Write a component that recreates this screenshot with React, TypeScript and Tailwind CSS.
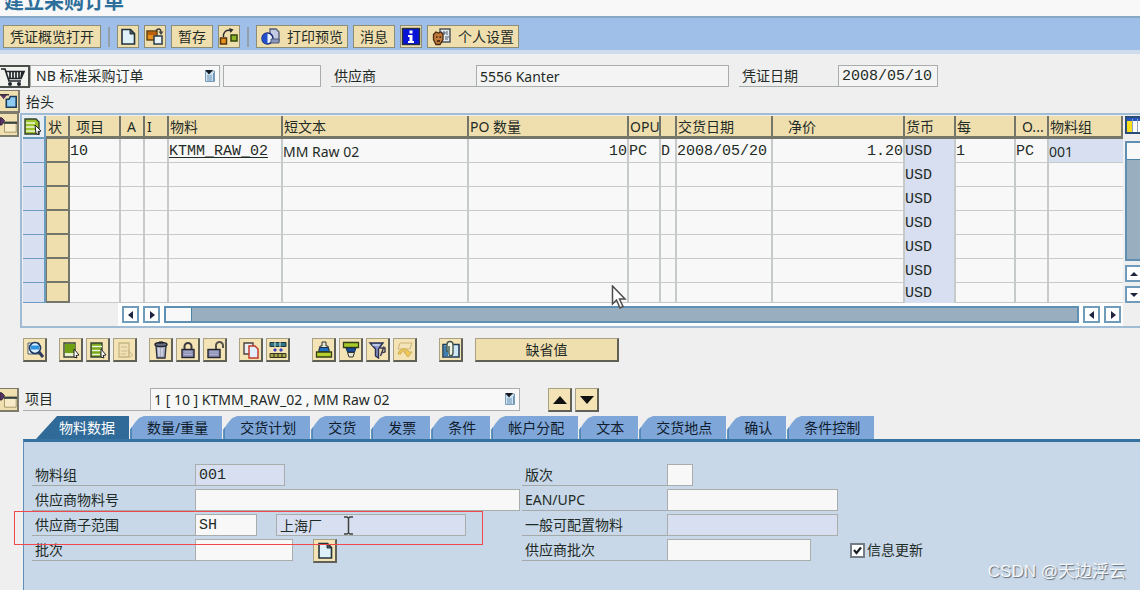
import type { ReactNode } from "react";

const sans = "font-['Noto_Sans','Noto_Sans_CJK_SC',sans-serif]";
const mono = "font-['Liberation_Mono','Noto_Sans_CJK_SC',monospace] text-[15px]";

function Svg({ children, size = 20 }: { children: ReactNode; size?: number }) {
  return (
    <svg width={size} height={size} viewBox="0 0 20 20" fill="none" aria-hidden="true" className="shrink-0">
      {children}
    </svg>
  );
}

const PageIcon = () => (
  <Svg>
    <path d="M4 2.5h8.5l4 4V17H4z" fill="#dff1f8" stroke="#23333a" strokeWidth="1.6" />
    <path d="M12 2.5v4.5h4.5z" fill="#4a5a60" stroke="#23333a" />
  </Svg>
);

const OtherDocIcon = () => (
  <Svg>
    <rect x="2" y="4" width="10" height="9" fill="#e8901c" stroke="#5a3a10" strokeWidth="1.4" />
    <path d="M3 5h8v3H3z" fill="#b8600c" />
    <rect x="9" y="9" width="8" height="8" fill="#e8f4fa" stroke="#2b3b48" strokeWidth="1.5" />
    <path d="M11 3.500c2-2.500 5-2 5 1.500" stroke="#333" strokeWidth="1.4" />
    <path d="M13.500 4.500h5L16 8z" fill="#444" />
  </Svg>
);

const FlowIcon = () => (
  <Svg>
    <rect x="1.5" y="11" width="6" height="6" fill="#e8901c" stroke="#53350f" strokeWidth="1.5" />
    <rect x="12" y="8" width="6" height="6" fill="#8db52a" stroke="#33450f" strokeWidth="1.5" />
    <path d="M4.500 10V7.500C5.500 4 8 2.500 11 3.500" stroke="#2b2b2b" strokeWidth="1.4" />
    <path d="m10 1 4.500 1.500L11.500 6z" fill="#2b2b2b" />
  </Svg>
);

const PreviewIcon = () => (
  <Svg>
    <path d="M9 2h6l3 3v9H9z" fill="#c3cbe2" stroke="#515a78" strokeWidth="1.3" />
    <circle cx="6.5" cy="11.5" r="5.5" fill="#e8f2ff" stroke="#1d2c78" strokeWidth="1.5" />
    <path d="M6.5 6a5.5 5.5 0 0 0 0 11z" fill="#234fc9" />
    <path d="M10 12h8v4h-8z" fill="#8b97bc" stroke="#515a78" />
  </Svg>
);

const InfoIcon = () => (
  <Svg>
    <rect x="1.5" y="1.5" width="17" height="16" fill="#0714d8" stroke="#26303c" strokeWidth="1.4" />
    <path d="M8.500 3.500h3v3h-3zM7 8h4.500v6H13v2H7v-2h1.500v-4H7z" fill="#fff" />
  </Svg>
);

const PersonalIcon = () => (
  <Svg>
    <rect x="8" y="2" width="10" height="13" fill="#e3eaf0" stroke="#454b52" strokeWidth="1.4" />
    <path d="M11 5h2v2h-2zM14 5h2M14 7h2M13 10h4M13 12h3" stroke="#4a5a6a" />
    <path d="M1.500 7.500 4 5l2.500 1L9 5l2 2.500v5L8 17.500H4l-2.500-5z" fill="#c07a3c" stroke="#4a2a12" strokeWidth="1.3" />
    <path d="M4 10h1.500M7.500 10H9M5 14h3" stroke="#3a1d0a" strokeWidth="1.3" />
  </Svg>
);

const CartIcon = () => (
  <svg width="28" height="20" viewBox="0 0 28 20" fill="none" aria-hidden="true">
    <path d="M1 2h4l4 12h12M6 4.500h18l-3 7H8.500M10 5v6M13 5v6M16 5v6M19 5v6M22 5l-1 6" stroke="#20262a" strokeWidth="1.7" />
    <circle cx="10" cy="17" r="2" fill="#20262a" />
    <circle cx="19" cy="17" r="2" fill="#20262a" />
  </svg>
);

const ListPickIcon = () => (
  <svg width="12" height="14" viewBox="0 0 12 14" fill="none" aria-hidden="true">
    <path d="M1.500 2h9v10.500h-9z" fill="#cfe3f1" stroke="#7c9db5" />
    <path d="M3 7h5M3 9h5M3 11h5M9.500 4v8" stroke="#6d97b8" />
    <path d="M1 1h8L5 5.500z" fill="#151b22" />
  </svg>
);

const HeaderExpandIcon = () => (
  <Svg size={18}>
    <path d="M7 8h3l1.500-3H18v12H7z" fill="#8ecbf2" stroke="#1e3c58" strokeWidth="1.8" />
    <path d="M0 3h8L4 8z" fill="#5c3468" />
    <path d="M0 3h10" stroke="#33303c" strokeWidth="1.6" />
  </Svg>
);

const FolderIcon = () => (
  <Svg size={18}>
    <path d="M5 7h13v11H5z" fill="#f8ecc8" stroke="#a29268" />
    <path d="M4 7.500h15" stroke="#33403c" strokeWidth="2.4" />
    <path d="M0 2h2l3 3-3 5H0z" fill="#5c3468" stroke="#2c2030" />
  </Svg>
);

const SelectAllIcon = () => (
  <Svg>
    <path d="M2 2h11l3 3v12H2z" fill="#9cc32b" stroke="#33402a" strokeWidth="1.4" />
    <path d="M3 6h9M3 10h10M3 14h9" stroke="#f2f8dc" strokeWidth="1.5" />
    <path d="m12 8 6 6-3 .5 1 3-3-1z" fill="#fff" stroke="#222" />
  </Svg>
);

const ColumnsIcon = () => (
  <svg width="24" height="19" viewBox="0 0 24 19" aria-hidden="true" className="shrink-0">
    <path d="M1 1h22v16H1z" fill="#fff" stroke="#2a4c78" strokeWidth="2" />
    <path d="M2 2h21v3H2z" fill="#2458bd" />
    <path d="M2 5h5v11H2z" fill="#f6de1a" />
    <path d="M7.500 3v13M12.500 3v13M17.500 3v13" stroke="#8ea6c4" />
  </svg>
);

const DetailIcon = () => (
  <Svg>
    <path d="M3 3h11v11H3z" fill="#f7f9fb" stroke="#555f66" />
    <circle cx="10" cy="8" r="5.500" fill="#d9efff" stroke="#1c3d63" strokeWidth="1.6" />
    <path d="M6 5.500h8v4H6z" fill="#2c93e0" />
    <path d="m14 12 4 5" stroke="#2b3a5e" strokeWidth="3" />
  </Svg>
);

const SelectBlockIcon = () => (
  <Svg>
    <path d="M3 3h11v14H3z" fill="#e6efd0" stroke="#394233" strokeWidth="1.4" />
    <path d="M4 4h10v9H4z" fill="#70a012" />
    <path d="m13 9 5 6-3 .5 1 2.500-3-1z" fill="#fff" stroke="#222" />
  </Svg>
);

const SelectRowsIcon = () => (
  <Svg>
    <path d="M3 3h11v14H3z" fill="#78a81c" stroke="#394233" strokeWidth="1.4" />
    <path d="M4 6.500h10M4 10.500h10M4 14.500h8" stroke="#eef4d6" strokeWidth="1.5" />
    <path d="m13 9 5 6-3 .5 1 2.500-3-1z" fill="#fff" stroke="#222" />
  </Svg>
);

const DeselectIcon = () => (
  <Svg>
    <path d="M4 3h10v14H4z" fill="#f0e0b4" stroke="#c8b684" strokeWidth="1.3" />
    <path d="M6 7h6M6 11h6M6 14h5M13 10l5 5-3 2z" stroke="#cdbb8a" />
  </Svg>
);

const TrashIcon = () => (
  <Svg>
    <path d="M5 6h10l-1 12H6z" fill="#a9adc4" stroke="#2b2e3c" strokeWidth="1.3" />
    <path d="M8 8v8M11 8v8" stroke="#eceef6" />
    <ellipse cx="10" cy="4.500" rx="6" ry="2" fill="#6c7084" stroke="#22252f" strokeWidth="1.4" />
    <path d="M8 2.500h4" stroke="#22252f" strokeWidth="2" />
  </Svg>
);

const LockIcon = () => (
  <Svg>
    <path d="M6.500 10V6.500a3.500 3.500 0 0 1 7 0V10" stroke="#3b3b3f" strokeWidth="2" />
    <rect x="4" y="9.500" width="12" height="8" fill="#8d8fb4" stroke="#24262f" strokeWidth="1.4" />
    <path d="M6 12h8M6 14.500h8" stroke="#b4b6d2" />
  </Svg>
);

const UnlockIcon = () => (
  <Svg>
    <path d="M11 9V5.500a3.500 3.500 0 0 1 7 0V8" stroke="#55534c" strokeWidth="2" />
    <rect x="3" y="9.500" width="12" height="8" fill="#8d8fb4" stroke="#24262f" strokeWidth="1.4" />
    <path d="M5 12h8M5 14.500h8" stroke="#b4b6d2" />
  </Svg>
);

const CopyIcon = () => (
  <Svg>
    <path d="M3 3h9v11H3z" fill="#eceef2" stroke="#4b4240" strokeWidth="1.4" />
    <path d="M8 6h6l3 3v9H8z" fill="#e2efff" stroke="#c33a2c" strokeWidth="1.5" />
  </Svg>
);

const CompareIcon = () => (
  <Svg>
    <path d="M2 2.500h16v4H2z" fill="#2f7688" stroke="#20343a" />
    <path d="M7 2v5M12 2v5" stroke="#d6e6d8" />
    <path d="m5 10 2-2 2 2-2 2zM11 10l2-2 2 2-2 2z" fill="#3f3fc4" />
    <path d="M2 13.500h16v4H2z" fill="#a8a24a" stroke="#34381f" />
    <path d="M6 13v5M10 13v5M14 13v5" stroke="#2b2f1c" />
  </Svg>
);

const SortUpIcon = () => (
  <Svg>
    <path d="M8 2h4v4h2l1 4H5l1-4h2z" fill="#e6e6d0" stroke="#333" />
    <path d="M6 7.500h8l1.500 4h-11z" fill="#1e6fc2" stroke="#183350" />
    <path d="M2.500 12h15v5h-15z" fill="#b5cf2e" stroke="#333f14" strokeWidth="1.300" />
  </Svg>
);

const SortDownIcon = () => (
  <Svg>
    <path d="M2.500 2.500h15v5h-15z" fill="#a9cb2a" stroke="#333f14" strokeWidth="1.300" />
    <path d="M5 8h10l-1.500 4h-7z" fill="#1a4c9c" stroke="#142b50" />
    <path d="M6.500 12.500h7L12 17H8z" fill="#e6e6d0" stroke="#333" />
  </Svg>
);

const FilterIcon = () => (
  <Svg>
    <path d="M2 3h13l-4.500 6v9l-3-2V9z" fill="#8795c9" stroke="#2a3052" strokeWidth="1.400" />
    <path d="M4.500 5h7" stroke="#d8dff6" strokeWidth="1.400" />
    <path d="M12.500 16 16 6.500M12 8h5v4l-4 1" stroke="#3e3e54" strokeWidth="1.500" />
  </Svg>
);

const SubtotalIcon = () => (
  <Svg>
    <path d="M5 3h12l-2 6H3z" fill="#f2e3b8" stroke="#cbb57c" />
    <path d="M3 14c1-6 9-7 11-2h3l-4 5-4-5h2c-2-2-5-1-5 2z" fill="#efc957" stroke="#cfae5a" />
  </Svg>
);

const AttachIcon = () => (
  <Svg>
    <path d="M2 4.500h16V17H2z" fill="#cfe8f8" stroke="#203d56" strokeWidth="1.600" />
    <path d="M3 5.500h4V16H3z" fill="#3f7fb0" />
    <path d="M6 12V4.500a3 3 0 0 1 6 0V12c0 5-4 5-4 1V6" fill="#f3f3e2" stroke="#42564a" strokeWidth="1.400" />
  </Svg>
);

function BarButton({ label, icon, children }: { label?: string; icon?: ReactNode; children?: ReactNode }) {
  const pad = !children ? "px-0" : icon ? "px-1" : "px-1.5";
  return (
    <button
      type="button"
      aria-label={label}
      className={`flex h-[23px] items-center whitespace-nowrap border border-[#8d8c74] bg-[#efdfaf] ${pad}`}
    >
      {icon}
      {children && <span className={icon ? "pl-1.5" : ""}>{children}</span>}
    </button>
  );
}

function IconButton({ label, children }: { label: string; children: ReactNode }) {
  return (
    <button
      type="button"
      aria-label={label}
      className="flex size-6 shrink-0 items-center justify-center border border-b-2 border-r-2 border-[#a9a184] border-b-[#5f6156] border-r-[#5f6156] bg-[#f3e3b5]"
    >
      {children}
    </button>
  );
}

function Field({ id, label, labelWidth, children }: { id: string; label: string; labelWidth: string; children: ReactNode }) {
  return (
    <div className="flex h-[22px]">
      <label htmlFor={id} className={`${labelWidth} shrink-0 border-b border-[#a3aaa9] pl-[3px] leading-[22px]`}>
        {label}
      </label>
      {children}
    </div>
  );
}

const box = "h-[22px] border border-[#a9aeac] px-[3px] outline-none";

function ArrowButton({ dir, label }: { dir: "left" | "right" | "up" | "down"; label: string }) {
  const paths = {
    left: "M7 1v8L2 5z",
    right: "M3 1v8l5-4z",
    up: "M1 7h8L5 3z",
    down: "M1 3h8L5 7z",
  };
  return (
    <button type="button" aria-label={label} className="flex size-[17px] shrink-0 items-center justify-center border-2 border-[#6f9cbb] bg-white">
      <svg width="10" height="10" viewBox="0 0 10 10" aria-hidden="true">
        <path d={paths[dir]} fill="#1c2440" />
      </svg>
    </button>
  );
}

const columns = [
  { label: "状", width: "w-6", pad: "pl-0.5" },
  { label: "项目", width: "w-[51px]", pad: "pl-1.5" },
  { label: "A", width: "w-6", pad: "pl-1.5" },
  { label: "I", width: "w-6", pad: "pl-0.5" },
  { label: "物料", width: "w-[114px]", pad: "pl-px" },
  { label: "短文本", width: "", pad: "pl-px" },
  { label: "PO 数量", width: "w-40", pad: "pl-px" },
  { label: "OPU", width: "w-8", pad: "pl-px" },
  { label: "", width: "w-4", pad: "" },
  { label: "交货日期", width: "w-24", pad: "pl-px" },
  { label: "净价", width: "w-[132px]", pad: "pl-[15px]" },
  { label: "货币", width: "w-[51px]", pad: "pl-px" },
  { label: "每", width: "w-[60px]", pad: "pl-px" },
  { label: "O...", width: "w-[33px]", pad: "pl-1.5" },
  { label: "物料组", width: "w-[74px]", pad: "pl-px" },
];

const emptyRow = { item: "", material: "", text: "", qty: "", unit: "", cat: "", date: "", price: "", currency: "USD", per: "", priceUnit: "", group: "" };

const rows = [
  { item: "10", material: "KTMM_RAW_02", text: "MM Raw 02", qty: "10", unit: "PC", cat: "D", date: "2008/05/20", price: "1.20", currency: "USD", per: "1", priceUnit: "PC", group: "001" },
  ...Array.from({ length: 6 }, () => emptyRow),
];

const tabs = ["物料数据", "数量/重量", "交货计划", "交货", "发票", "条件", "帐户分配", "文本", "交货地点", "确认", "条件控制"];

function ItemTable() {
  const cell = "overflow-hidden whitespace-nowrap border-b border-r-2 border-[#c6caca] p-0 pt-0.5";
  return (
    <table className="w-full table-fixed border-separate border-spacing-0 bg-[#f8f8f8]">
      <colgroup>
        <col className="w-[23px]" />
        {columns.map((c, i) => (
          <col key={i} className={c.width} />
        ))}
      </colgroup>
      <thead>
        <tr className="h-[23px]">
          <th className="border-b-2 border-r-2 border-[#6c9cc0] bg-[#e5edf5] p-0">
            <button type="button" aria-label="全选" className="block">
              <SelectAllIcon />
            </button>
          </th>
          {columns.map((c, i) => (
            <th
              key={i}
              className={`overflow-hidden whitespace-nowrap border-b-[3px] border-r-2 border-[#74766a] bg-[#efdfaf] p-0 pt-0.5 text-left font-normal leading-[18px] ${c.pad}`}
            >
              {c.label}
            </th>
          ))}
        </tr>
      </thead>
      <tbody>
        {rows.map((r, i) => (
          <tr key={i} className={i === rows.length - 1 ? "h-5 leading-[17px]" : "h-6 leading-[21px]"}>
            <td className="border-b border-r-2 border-[#6c9cc0] bg-[#d8dff0] p-0" />
            <td className="border-b-2 border-l border-r-2 border-[#74766a] bg-[#efdfaf] p-0" />
            <td className={`${cell} ${mono}`}>{r.item}</td>
            <td className={cell} />
            <td className={cell} />
            <td className={`${cell} ${mono}`}>
              {r.material && (
                <a href="#material" className="underline underline-offset-2">
                  {r.material}
                </a>
              )}
            </td>
            <td className={cell}>{r.text}</td>
            <td className={`${cell} ${mono} text-right`}>{r.qty}</td>
            <td className={`${cell} ${mono}`}>{r.unit}</td>
            <td className={`${cell} ${mono}`}>{r.cat}</td>
            <td className={`${cell} ${mono}`}>{r.date}</td>
            <td className={`${cell} ${mono} text-right`}>{r.price}</td>
            <td className={`overflow-hidden border-r-2 border-[#c6caca] bg-[#d8dff0] p-0 pt-px ${mono}`}>{r.currency}</td>
            <td className={`${cell} ${mono}`}>{r.per}</td>
            <td className={`${cell} ${mono}`}>{r.priceUnit}</td>
            <td className={`overflow-hidden border-b border-[#c6caca] p-0 pt-0.5 ${r.group ? "bg-[#d8dff0]" : ""}`}>{r.group}</td>
          </tr>
        ))}
      </tbody>
    </table>
  );
}

export default function App() {
  return (
    <div className={`relative flex min-h-screen flex-col overflow-hidden bg-[#efefef] text-sm text-[#1f2b26] ${sans}`}>
      <header>
        <div className="flex h-4 items-end overflow-hidden bg-[#f8f8f8] pb-1 pl-1">
          <h1 className="text-xl font-bold leading-5 text-[#2d6e9b]">建立采购订单</h1>
        </div>
        <div className="flex items-center gap-[5px] border-b-4 border-t-2 border-b-[#cfdceb] border-t-[#86a9c6] bg-[#9fbfe9] px-[3px] pb-0.5 pt-[7px]">
          <BarButton>凭证概览打开</BarButton>
          <span className="mx-0.5 h-5 w-0.5 bg-[#93a0ac]" />
          <BarButton label="新建" icon={<PageIcon />} />
          <BarButton label="其他采购订单" icon={<OtherDocIcon />} />
          <BarButton>暂存</BarButton>
          <BarButton label="凭证流" icon={<FlowIcon />} />
          <span className="mx-0.5 h-5 w-0.5 bg-[#93a0ac]" />
          <BarButton icon={<PreviewIcon />}>打印预览</BarButton>
          <BarButton>消息</BarButton>
          <BarButton label="帮助" icon={<InfoIcon />} />
          <BarButton icon={<PersonalIcon />}>个人设置</BarButton>
        </div>
      </header>

      <main className="flex flex-1 flex-col pt-[11px]">
        <div className="flex">
          <button type="button" aria-label="购物车" className="flex h-[23px] w-[30px] items-center justify-center border-2 border-l-0 border-[#4b4f4a] bg-[#f2f2ef]">
            <CartIcon />
          </button>
          <div className="relative">
            <select aria-label="凭证类型" className={`${box} w-[190px] appearance-none bg-[#f8f8f8] pl-[5px]`}>
              <option>NB 标准采购订单</option>
            </select>
            <span className="pointer-events-none absolute right-1 top-1">
              <ListPickIcon />
            </span>
          </div>
          <input aria-label="采购订单号" className={`${box} ml-[3px] w-[98px] bg-[#f4f4f4]`} />
          <div className="ml-2.5">
            <Field id="vendor" label="供应商" labelWidth="w-[145px]">
              <input id="vendor" defaultValue="5556 Kanter" className={`${box} w-[253px] bg-[#f4f4f4]`} />
            </Field>
          </div>
          <div className="ml-2.5">
            <Field id="doc-date" label="凭证日期" labelWidth="w-[99px]">
              <input id="doc-date" defaultValue="2008/05/10" className={`${box} ${mono} w-[100px] bg-[#f4f4f4]`} />
            </Field>
          </div>
        </div>

        <div className="mt-0.5 flex h-[23px] items-center">
          <button type="button" aria-label="展开抬头" className="flex h-[23px] w-5 items-center border-b-2 border-r-2 border-t border-[#7d7b6c] bg-[#f0e0b0]">
            <HeaderExpandIcon />
          </button>
          <h2 className="pl-1.5">抬头</h2>
        </div>

        <section className="flex items-start" aria-label="项目概览">
          <button type="button" aria-label="展开项目概览" className="flex h-6 w-[19px] items-center border-b-2 border-r-2 border-t border-[#7d7b6c] bg-[#f0e0b0]">
            <FolderIcon />
          </button>
          <div className="ml-px flex min-w-0 flex-1 border-2 border-r-0 border-[#a0bcd4] pl-px pt-px">
            <div className="min-w-0 flex-1">
              <ItemTable />
              <div className="flex h-[23px] items-center gap-1 bg-white pr-0.5">
                <span className="h-full w-[95px] bg-[#efefef]" />
                <ArrowButton dir="left" label="第一列" />
                <ArrowButton dir="right" label="下一列" />
                <div className="flex h-[17px] flex-1 border-2 border-[#5f8fb2] bg-[#99aebf]">
                  <span className="w-[26px] border-r border-[#4f83a8] bg-[#f8f8f8]" />
                </div>
                <ArrowButton dir="left" label="向左滚动" />
                <ArrowButton dir="right" label="向右滚动" />
              </div>
            </div>
            <div className="ml-0.5 flex w-[15px] shrink-0 flex-col overflow-hidden">
              <button type="button" aria-label="表格设置">
                <ColumnsIcon />
              </button>
              <div className="mt-1.5 h-[120px] w-[18px] border-2 border-[#5f8fb2] bg-[#99aebf]">
                <div className="h-[17px] border-b border-[#4f83a8] bg-[#f8f8f8]" />
              </div>
              <div className="mt-1 flex flex-col gap-1">
                <ArrowButton dir="up" label="向上滚动" />
                <ArrowButton dir="down" label="向下滚动" />
              </div>
            </div>
          </div>
        </section>

        <div className="mt-2.5 flex pl-[23px]">
          <div className="flex">
            <IconButton label="明细"><DetailIcon /></IconButton>
          </div>
          <div className="ml-3 flex gap-[3px]">
            <IconButton label="选择区块"><SelectBlockIcon /></IconButton>
            <IconButton label="选择全部"><SelectRowsIcon /></IconButton>
            <IconButton label="取消选择"><DeselectIcon /></IconButton>
          </div>
          <div className="ml-3 flex gap-[3px]">
            <IconButton label="删除"><TrashIcon /></IconButton>
            <IconButton label="锁定"><LockIcon /></IconButton>
            <IconButton label="解锁"><UnlockIcon /></IconButton>
          </div>
          <div className="ml-3 flex gap-[3px]">
            <IconButton label="复制"><CopyIcon /></IconButton>
            <IconButton label="比较"><CompareIcon /></IconButton>
          </div>
          <div className="ml-[22px] flex gap-[3px]">
            <IconButton label="升序"><SortUpIcon /></IconButton>
            <IconButton label="降序"><SortDownIcon /></IconButton>
            <IconButton label="过滤"><FilterIcon /></IconButton>
            <IconButton label="小计"><SubtotalIcon /></IconButton>
          </div>
          <div className="ml-[22px] flex">
            <IconButton label="附加"><AttachIcon /></IconButton>
          </div>
          <button type="button" className="ml-3 h-6 w-36 border border-b-2 border-r-2 border-[#a9a184] border-b-[#5f6156] border-r-[#5f6156] bg-[#efdfaf]">
            缺省值
          </button>
        </div>

        <div className="mt-[26px] flex h-6">
          <button type="button" aria-label="收起项目" className="flex h-6 w-[19px] items-center border-b-2 border-r-2 border-t border-[#7d7b6c] bg-[#f0e0b0]">
            <FolderIcon />
          </button>
          <label htmlFor="item" className="ml-1 h-[23px] w-[127px] border-b border-[#a9aeac] pl-0.5 leading-[22px]">项目</label>
          <div className="relative">
            <select id="item" className={`${box} h-[23px] w-[370px] appearance-none bg-[#f8f8f8]`}>
              <option>1 [ 10 ] KTMM_RAW_02 , MM Raw 02</option>
            </select>
            <span className="pointer-events-none absolute right-1 top-1">
              <ListPickIcon />
            </span>
          </div>
          <div className="ml-7 flex gap-[3px]">
            <IconButton label="上一项目">
              <svg width="14" height="8" viewBox="0 0 14 8" aria-hidden="true"><path d="M0 8h14L7 0z" fill="#111" /></svg>
            </IconButton>
            <IconButton label="下一项目">
              <svg width="14" height="8" viewBox="0 0 14 8" aria-hidden="true"><path d="M0 0h14L7 8z" fill="#111" /></svg>
            </IconButton>
          </div>
        </div>

        <div className="mt-1 flex gap-px pl-9" role="tablist">
          {tabs.map((t, i) => (
            <button
              key={t}
              type="button"
              role="tab"
              aria-selected={i === 0}
              className={
                i === 0
                  ? "h-[23px] whitespace-nowrap bg-[#2f6a99] pl-[23px] pr-3.5 text-white [clip-path:polygon(0_100%,21px_0,100%_0,100%_100%)]"
                  : "h-[23px] whitespace-nowrap border-l-2 border-[#5288b5] bg-[#7ea6d9] pl-[15px] pr-3.5 text-[#101c2c] [clip-path:polygon(0_100%,0_60%,5px_28%,9px_9%,14px_0,100%_0,100%_100%)]"
              }
            >
              {t}
            </button>
          ))}
        </div>

        <div className="ml-[23px] flex flex-1 border-l border-t-[3px] border-l-[#5f8fb8] border-t-[#3672a0] bg-[#c8d8e9] pb-7 pl-2 pt-[22px]">
          <div className="flex w-[490px] shrink-0 flex-col gap-[3px]">
            <Field id="group" label="物料组" labelWidth="w-[163px]">
              <input id="group" readOnly defaultValue="001" className={`${box} ${mono} w-[90px] bg-[#d8dff0]`} />
            </Field>
            <Field id="vendor-mat" label="供应商物料号" labelWidth="w-[163px]">
              <input id="vendor-mat" className={`${box} w-[325px] bg-[#f8f8f8]`} />
            </Field>
            <div className="relative">
              <Field id="subrange" label="供应商子范围" labelWidth="w-[163px]">
                <input id="subrange" defaultValue="SH" className={`${box} ${mono} w-[62px] bg-[#f8f8f8]`} />
                <input aria-label="子范围描述" readOnly defaultValue="上海厂" className={`${box} ml-[19px] w-[190px] bg-[#d8dff0]`} />
              </Field>
              <div className="pointer-events-none absolute -left-[18px] -top-[3px] z-10 h-[34px] w-[469px] border border-[#f0484c]" />
              <svg width="9" height="19" viewBox="0 0 9 19" fill="none" aria-hidden="true" className="absolute left-[312px] top-0.5">
                <path d="M0 1h3l1.500 1L6 1h3M4.500 2v15M0 18h3l1.500-1L6 18h3" stroke="#3d423f" strokeWidth="1.500" />
              </svg>
            </div>
            <Field id="batch" label="批次" labelWidth="w-[163px]">
              <input id="batch" className={`${box} w-[98px] bg-[#f8f8f8]`} />
              <span className="ml-5">
                <IconButton label="创建批次"><PageIcon /></IconButton>
              </span>
            </Field>
          </div>
          <div className="flex flex-col gap-[3px]">
            <Field id="revision" label="版次" labelWidth="w-[145px]">
              <input id="revision" className={`${box} w-[26px] bg-[#f8f8f8]`} />
            </Field>
            <Field id="ean" label="EAN/UPC" labelWidth="w-[145px]">
              <input id="ean" className={`${box} w-[171px] bg-[#f8f8f8]`} />
            </Field>
            <Field id="config" label="一般可配置物料" labelWidth="w-[145px]">
              <input id="config" readOnly className={`${box} w-[171px] bg-[#d8dff0]`} />
            </Field>
            <Field id="vendor-batch" label="供应商批次" labelWidth="w-[145px]">
              <input id="vendor-batch" className={`${box} w-36 bg-[#f8f8f8]`} />
              <label className="ml-[39px] flex items-center gap-0.5 whitespace-nowrap">
                <span className="relative flex">
                  <input type="checkbox" defaultChecked className="peer size-[15px] appearance-none border-2 border-[#747c86] bg-white" />
                  <svg width="15" height="15" viewBox="0 0 15 15" fill="none" aria-hidden="true" className="pointer-events-none invisible absolute inset-0 peer-checked:visible">
                    <path d="m4 7 2.500 3L11 4.500" stroke="#1b1f26" strokeWidth="2.200" />
                  </svg>
                </span>
                信息更新
              </label>
            </Field>
          </div>
        </div>
      </main>

      <svg width="16" height="26" viewBox="0 0 16 26" aria-hidden="true" className="pointer-events-none absolute left-[611px] top-[285px]">
        <path d="M1.500 1v18l4-4 3.500 8 3-1.500L8.500 14H14z" fill="#fff" stroke="#4c4c4c" strokeWidth="1.500" />
      </svg>
      <p className="pointer-events-none absolute bottom-1.5 right-3.5 font-['Liberation_Sans','Noto_Sans_CJK_SC',sans-serif] text-[17px] leading-6 text-white/90 [text-shadow:1px_1px_1px_#5f6b78]">
        CSDN @天边浮云
      </p>
    </div>
  );
}
